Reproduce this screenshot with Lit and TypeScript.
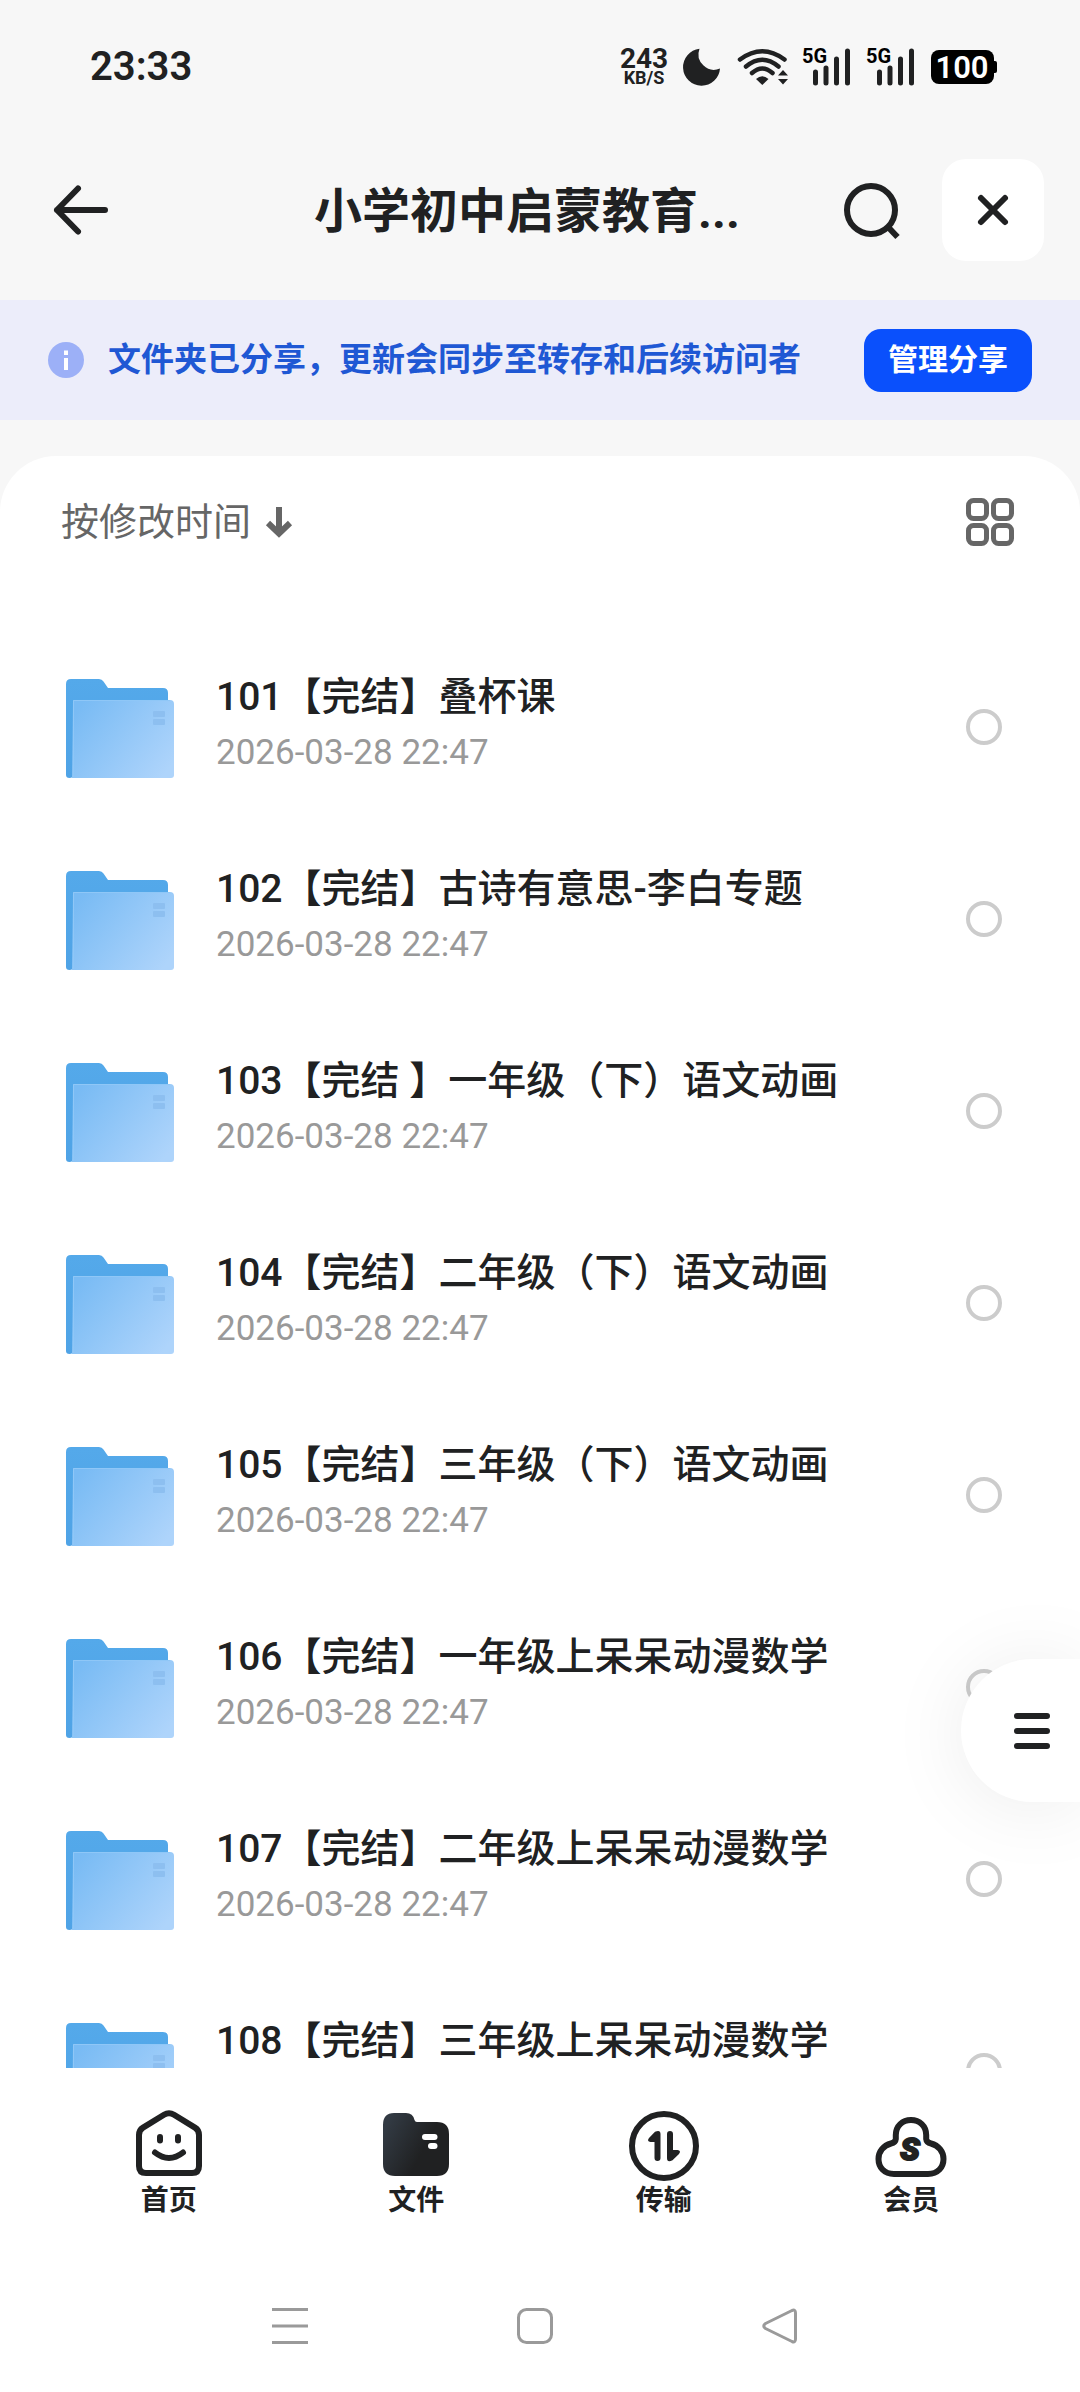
import { LitElement, html, svg, css } from "lit";
import { customElement, property } from "lit/decorators.js";

const FOLDERS = [
  { name: "101【完结】叠杯课", time: "2026-03-28 22:47" },
  { name: "102【完结】古诗有意思-李白专题", time: "2026-03-28 22:47" },
  { name: "103【完结 】一年级（下）语文动画", time: "2026-03-28 22:47" },
  { name: "104【完结】二年级（下）语文动画", time: "2026-03-28 22:47" },
  { name: "105【完结】三年级（下）语文动画", time: "2026-03-28 22:47" },
  { name: "106【完结】一年级上呆呆动漫数学", time: "2026-03-28 22:47" },
  { name: "107【完结】二年级上呆呆动漫数学", time: "2026-03-28 22:47" },
  { name: "108【完结】三年级上呆呆动漫数学", time: "2026-03-28 22:47" },
];

const TABS = [
  {
    label: "首页",
    icon: svg`
      <path d="M31 6.8Q36 3.6 41 6.8L62 19.6Q66 22 66 27V58Q66 65 59 65H13Q6 65 6 58V27Q6 22 10 19.6Z" class="line" />
      <path d="M27 29V32.5M45 29V32.5" class="line" />
      <path d="M22 44.5Q36 55.500 50 44.500" class="line" />`,
  },
  {
    label: "文件",
    icon: svg`
      <defs>
        <linearGradient id="tabFolder" x1="0" y1="0.3" x2="0.6" y2="0.6">
          <stop offset="0" stop-color="#323a43" />
          <stop offset="1" stop-color="#202122" />
        </linearGradient>
      </defs>
      <path d="M14 5H26Q33 5 34.500 12Q35 14 37 14H57Q69 14 69 26V56Q69 68 57 68H15Q3 68 3 56V17Q3 5 14 5Z" fill="url(#tabFolder)" />
      <rect x="42" y="26" width="15.500" height="6" rx="3" fill="#fff" />
      <rect x="48" y="35" width="9.500" height="6" rx="3" fill="#fff" />`,
  },
  {
    label: "传输",
    icon: svg`
      <circle cx="36" cy="38" r="32" class="line" />
      <path d="M27 23.800Q32.500 21.500 32.500 26V50Q32.500 53 29.500 53T26.500 50V34H22.500Q18.500 33.500 21 30Z" fill="#202122" />
      <path d="M44.500 52.200Q39 55 39 50V26Q39 23 42 23T45 26V42H49.500Q53.500 42.500 51 46Z" fill="#202122" />`,
  },
  {
    label: "会员",
    icon: svg`
      <path d="M19 66C9 66 3.500 59 3.500 51C3.500 43.500 8.500 37.500 16 35.500Q20.500 34.500 20.800 31V27C20.800 18 27.500 12 36 12C44.500 12 51.200 18 51.200 27V31Q51.500 34.500 56 35.500C63.500 37.500 68.500 43.500 68.500 51C68.500 59 63 66 53 66Z" class="line" />
      <text x="35" y="52" text-anchor="middle" class="mark">S</text>`,
  },
];

@customElement("folder-row")
class FolderRow extends LitElement {
  @property() name = "";
  @property() time = "";

  static styles = css`
    :host {
      display: block;
    }
    .row {
      display: flex;
      align-items: center;
      height: 192px;
      padding: 0 78px 0 66px;
      box-sizing: border-box;
    }
    .folder {
      flex: none;
      width: 108px;
      height: 100px;
      margin-top: 4px;
    }
    .info {
      flex: 1;
      min-width: 0;
      margin-left: 42px;
      display: flex;
      flex-direction: column;
      gap: 4px;
      padding-bottom: 8px;
    }
    .name {
      font-size: 39px;
      line-height: 56px;
      font-weight: 500;
      color: #202122;
      white-space: nowrap;
    }
    .time {
      font-size: 35px;
      line-height: 48px;
      color: #999;
    }
    .pick {
      flex: none;
      appearance: none;
      margin: 0;
      width: 36px;
      height: 36px;
      border: 4px solid #ccc;
      border-radius: 50%;
    }
    .pick:checked {
      border-color: #0a52fa;
      background: #0a52fa;
    }
  `;

  render() {
    return html`
      <div class="row">
        <svg class="folder" viewBox="0 0 108 100" aria-hidden="true">
          <defs>
            <linearGradient id="front" x1="0" y1="0.2" x2="1" y2="0.8">
              <stop offset="0" stop-color="#79bbf4" />
              <stop offset="1" stop-color="#aed4fb" />
            </linearGradient>
            <linearGradient id="back" x1="0" y1="0" x2="0" y2="1">
              <stop offset="0" stop-color="#54a9ea" />
              <stop offset="1" stop-color="#4fa3e6" />
            </linearGradient>
          </defs>
          <path d="M5 0H33Q36 0 37.500 2.500L42 9H97Q102 9 102 14V60H7V96Q7 99 3.500 99T0 96V5Q0 0 5 0Z" fill="url(#back)" />
          <path d="M7 21H104Q108 21 108 25V96Q108 99 105 99H6Z" fill="url(#front)" />
          <path d="M7.500 98V21.500H104" fill="none" stroke="#8fc7f7" />
          <rect x="87" y="32" width="12" height="6" rx="1" fill="#8dbff0" />
          <rect x="87" y="40" width="12" height="6" rx="1" fill="#8dbff0" />
        </svg>
        <label class="info" for="pick">
          <span class="name">${this.name}</span>
          <span class="time">${this.time}</span>
        </label>
        <input class="pick" id="pick" type="checkbox" />
      </div>
    `;
  }
}

@customElement("app-root")
class AppRoot extends LitElement {
  static styles = css`
    :host {
      display: flex;
      flex-direction: column;
      position: relative;
      height: 100vh;
      overflow: hidden;
      background: #f7f7f7;
      color: #202122;
      font-family: Roboto, "Noto Sans CJK SC", sans-serif;
    }
    button {
      font: inherit;
      color: inherit;
      background: none;
      border: 0;
      padding: 0;
      display: flex;
      align-items: center;
      justify-content: center;
    }
    svg {
      display: block;
      flex: none;
      overflow: visible;
    }
    .status {
      flex: none;
      height: 120px;
      box-sizing: border-box;
      padding: 14px 83px 0 90px;
      display: flex;
      align-items: center;
      justify-content: space-between;
    }
    .clock {
      font-size: 40px;
      line-height: 48px;
      font-weight: 600;
    }
    .signals {
      display: flex;
      align-items: center;
      gap: 16px;
    }
    .speed {
      width: 46px;
      display: flex;
      flex-direction: column;
      align-items: center;
      font-weight: 700;
    }
    .rate {
      font-size: 28px;
      line-height: 22px;
    }
    .unit {
      font-size: 18px;
      line-height: 16px;
    }
    .net {
      font-size: 20px;
      font-weight: 700;
    }
    .level {
      font-size: 31px;
      font-weight: 600;
      fill: #fff;
    }
    .header {
      flex: none;
      height: 180px;
      padding: 0 36px 0 54px;
      display: flex;
      align-items: center;
    }
    .back {
      width: 156px;
      height: 102px;
      justify-content: flex-start;
    }
    .title {
      flex: 1;
      margin: 0;
      padding-top: 4px;
      text-align: center;
      font-size: 48px;
      line-height: 72px;
      font-weight: 700;
      white-space: nowrap;
    }
    .search {
      width: 56px;
      height: 102px;
      margin-right: 42px;
    }
    .close {
      width: 102px;
      height: 102px;
      border-radius: 24px;
      background: #fff;
    }
    .banner {
      flex: none;
      height: 120px;
      padding: 0 48px;
      background: #ecedfa;
      display: flex;
      align-items: center;
    }
    .notice {
      flex: 1;
      margin: 0 0 0 24px;
      font-size: 33px;
      line-height: 48px;
      font-weight: 700;
      color: #1f58d4;
      white-space: nowrap;
    }
    .manage {
      height: 63px;
      padding: 0 24px;
      border-radius: 17px;
      background: #0a50fc;
      color: #fff;
      font-size: 30px;
      line-height: 44px;
      font-weight: 700;
    }
    .card {
      flex: 1;
      min-height: 0;
      margin-top: 36px;
      background: #fff;
      border-radius: 56px 56px 0 0;
      display: flex;
      flex-direction: column;
    }
    .toolbar {
      flex: none;
      height: 132px;
      padding: 0 66px 0 61px;
      display: flex;
      align-items: center;
      justify-content: space-between;
      color: #666;
    }
    .sort {
      gap: 14px;
      font-size: 38px;
      line-height: 56px;
    }
    .list {
      flex: 1;
      min-height: 0;
      margin: 0;
      padding: 43px 0 0;
      list-style: none;
      overflow-y: auto;
      scrollbar-width: none;
    }
    .fab {
      position: absolute;
      right: 0;
      bottom: 590px;
      width: 119px;
      height: 143px;
      padding-left: 22px;
      border-radius: 72px 0 0 72px;
      background: #fff;
      box-shadow: 0 4px 80px rgba(0, 0, 0, 0.08);
    }
    .tabs {
      flex: none;
      height: 192px;
      box-sizing: border-box;
      padding: 40px 45px 0;
      display: grid;
      grid-template-columns: repeat(4, 1fr);
      background: #fff;
    }
    .tab {
      display: flex;
      flex-direction: column;
      align-items: center;
      gap: 2px;
      color: inherit;
      text-decoration: none;
      font-size: 28px;
      line-height: 38px;
      font-weight: 700;
    }
    .line {
      fill: none;
      stroke: #202122;
      stroke-width: 6px;
      stroke-linecap: round;
      stroke-linejoin: round;
    }
    .mark {
      font-size: 32px;
      font-weight: 900;
      font-style: italic;
      fill: #202122;
      stroke: #202122;
      stroke-width: 2px;
    }
    .system {
      flex: none;
      height: 132px;
      box-sizing: border-box;
      padding: 0 178px 0 167px;
      display: grid;
      grid-template-columns: repeat(3, 1fr);
      background: #fff;
    }
  `;

  private signal() {
    return html`
      <svg width="48" height="38" viewBox="0 0 48 38" aria-hidden="true">
        <text x="-1" y="15" class="net">5G</text>
        <path d="M12.500 24V35M23 20V35M33.500 11V35M44.500 3V35" fill="none" stroke="#202122" stroke-width="5" stroke-linecap="round" />
      </svg>
    `;
  }

  render() {
    return html`
      <div class="status">
        <span class="clock">23:33</span>
        <div class="signals">
          <span class="speed"><span class="rate">243</span><span class="unit">KB/S</span></span>
          <svg width="38" height="38" viewBox="0 0 38 38" aria-hidden="true">
            <path d="M16.500 0.800A18.500 18.500 0 1 0 37 20.500A15.500 15.500 0 0 1 16.500 0.800Z" fill="#202122" />
          </svg>
          <svg width="50" height="38" viewBox="0 0 50 38" aria-hidden="true">
            <g fill="none" stroke="#202122" stroke-width="4.500" stroke-linecap="round">
              <path d="M3 11.500Q25.300 -5 47.500 11.500" />
              <path d="M9 18.500Q25.300 5 41.500 18.500" />
              <path d="M15 25Q25.300 16 35.500 25" />
            </g>
            <path d="M19 31Q25.300 25.500 31.500 31L25.300 37Z" fill="#202122" />
            <path d="M41 27.500L46 22L51 27.500ZM41 31L46 36.500L51 31Z" fill="#202122" />
          </svg>
          ${this.signal()} ${this.signal()}
          <svg width="66" height="34" viewBox="0 0 66 34" aria-hidden="true">
            <rect width="63" height="34" rx="8" />
            <rect x="60" y="11" width="6" height="12" rx="2" />
            <text x="31" y="28" text-anchor="middle" class="level">100</text>
          </svg>
        </div>
      </div>

      <header class="header">
        <button class="back" aria-label="返回">
          <svg width="56" height="50" viewBox="0 0 56 50">
            <path d="M24 3.500L3 25L24 46.500M3 25H51" class="line" />
          </svg>
        </button>
        <h1 class="title">小学初中启蒙教育...</h1>
        <button class="search" aria-label="搜索">
          <svg width="58" height="58" viewBox="0 0 58 58">
            <circle cx="28" cy="29" r="24" class="line" />
            <path d="M45.500 46.500L54.500 56" fill="none" stroke="#202122" stroke-width="6" />
          </svg>
        </button>
        <button class="close" aria-label="关闭">
          <svg width="32" height="32" viewBox="0 0 32 32">
            <path d="M4 4L28 28M28 4L4 28" class="line" />
          </svg>
        </button>
      </header>

      <section class="banner">
        <svg width="36" height="36" viewBox="0 0 36 36" aria-hidden="true">
          <circle cx="18" cy="18" r="18" fill="#9cb0f7" />
          <path d="M16 8.500H20V13H16ZM16 16H20V28H16Z" fill="#fff" />
        </svg>
        <p class="notice">文件夹已分享，更新会同步至转存和后续访问者</p>
        <button class="manage">管理分享</button>
      </section>

      <main class="card">
        <div class="toolbar">
          <button class="sort">
            按修改时间
            <svg width="28" height="32" viewBox="0 0 28 32" aria-hidden="true">
              <path d="M14 1V27M3 17L14 27.500L25 17" fill="none" stroke="#666" stroke-width="6" />
            </svg>
          </button>
          <button aria-label="宫格视图">
            <svg width="48" height="48" viewBox="0 0 48 48">
              <g fill="none" stroke="#666" stroke-width="5">
                <rect x="2.500" y="2.500" width="18" height="18" rx="5" />
                <rect x="27.500" y="2.500" width="18" height="18" rx="5" />
                <rect x="2.500" y="27.500" width="18" height="18" rx="5" />
                <rect x="27.500" y="27.500" width="18" height="18" rx="5" />
              </g>
            </svg>
          </button>
        </div>
        <ul class="list">
          ${FOLDERS.map((f) => html`<li><folder-row .name=${f.name} .time=${f.time}></folder-row></li>`)}
        </ul>
      </main>

      <button class="fab" aria-label="更多">
        <svg width="36" height="36" viewBox="0 0 36 36">
          <path d="M3 3H33M3 18H33M3 33H33" class="line" />
        </svg>
      </button>

      <nav class="tabs">
        ${TABS.map(
          (t) => html`
            <a class="tab" href="#">
              <svg width="72" height="72" viewBox="0 0 72 72" aria-hidden="true">${t.icon}</svg>
              <span>${t.label}</span>
            </a>
          `,
        )}
      </nav>

      <div class="system">
        <button aria-label="最近任务">
          <svg width="36" height="36" viewBox="0 0 36 36">
            <path d="M0 1.500H36M0 18H36M0 34.500H36" fill="none" stroke="#9a9a9a" stroke-width="3" />
          </svg>
        </button>
        <button aria-label="主屏幕">
          <svg width="36" height="36" viewBox="0 0 36 36">
            <rect x="1.500" y="1.500" width="33" height="33" rx="8" fill="none" stroke="#9a9a9a" stroke-width="3" />
          </svg>
        </button>
        <button aria-label="返回上一页">
          <svg width="36" height="36" viewBox="0 0 36 36">
            <path d="M30 2.500Q33.500 1 33.500 5V31Q33.500 35 30 33.500L3.500 20.500Q0 18 3.500 15.500Z" fill="none" stroke="#9a9a9a" stroke-width="3" stroke-linejoin="round" />
          </svg>
        </button>
      </div>
    `;
  }
}
